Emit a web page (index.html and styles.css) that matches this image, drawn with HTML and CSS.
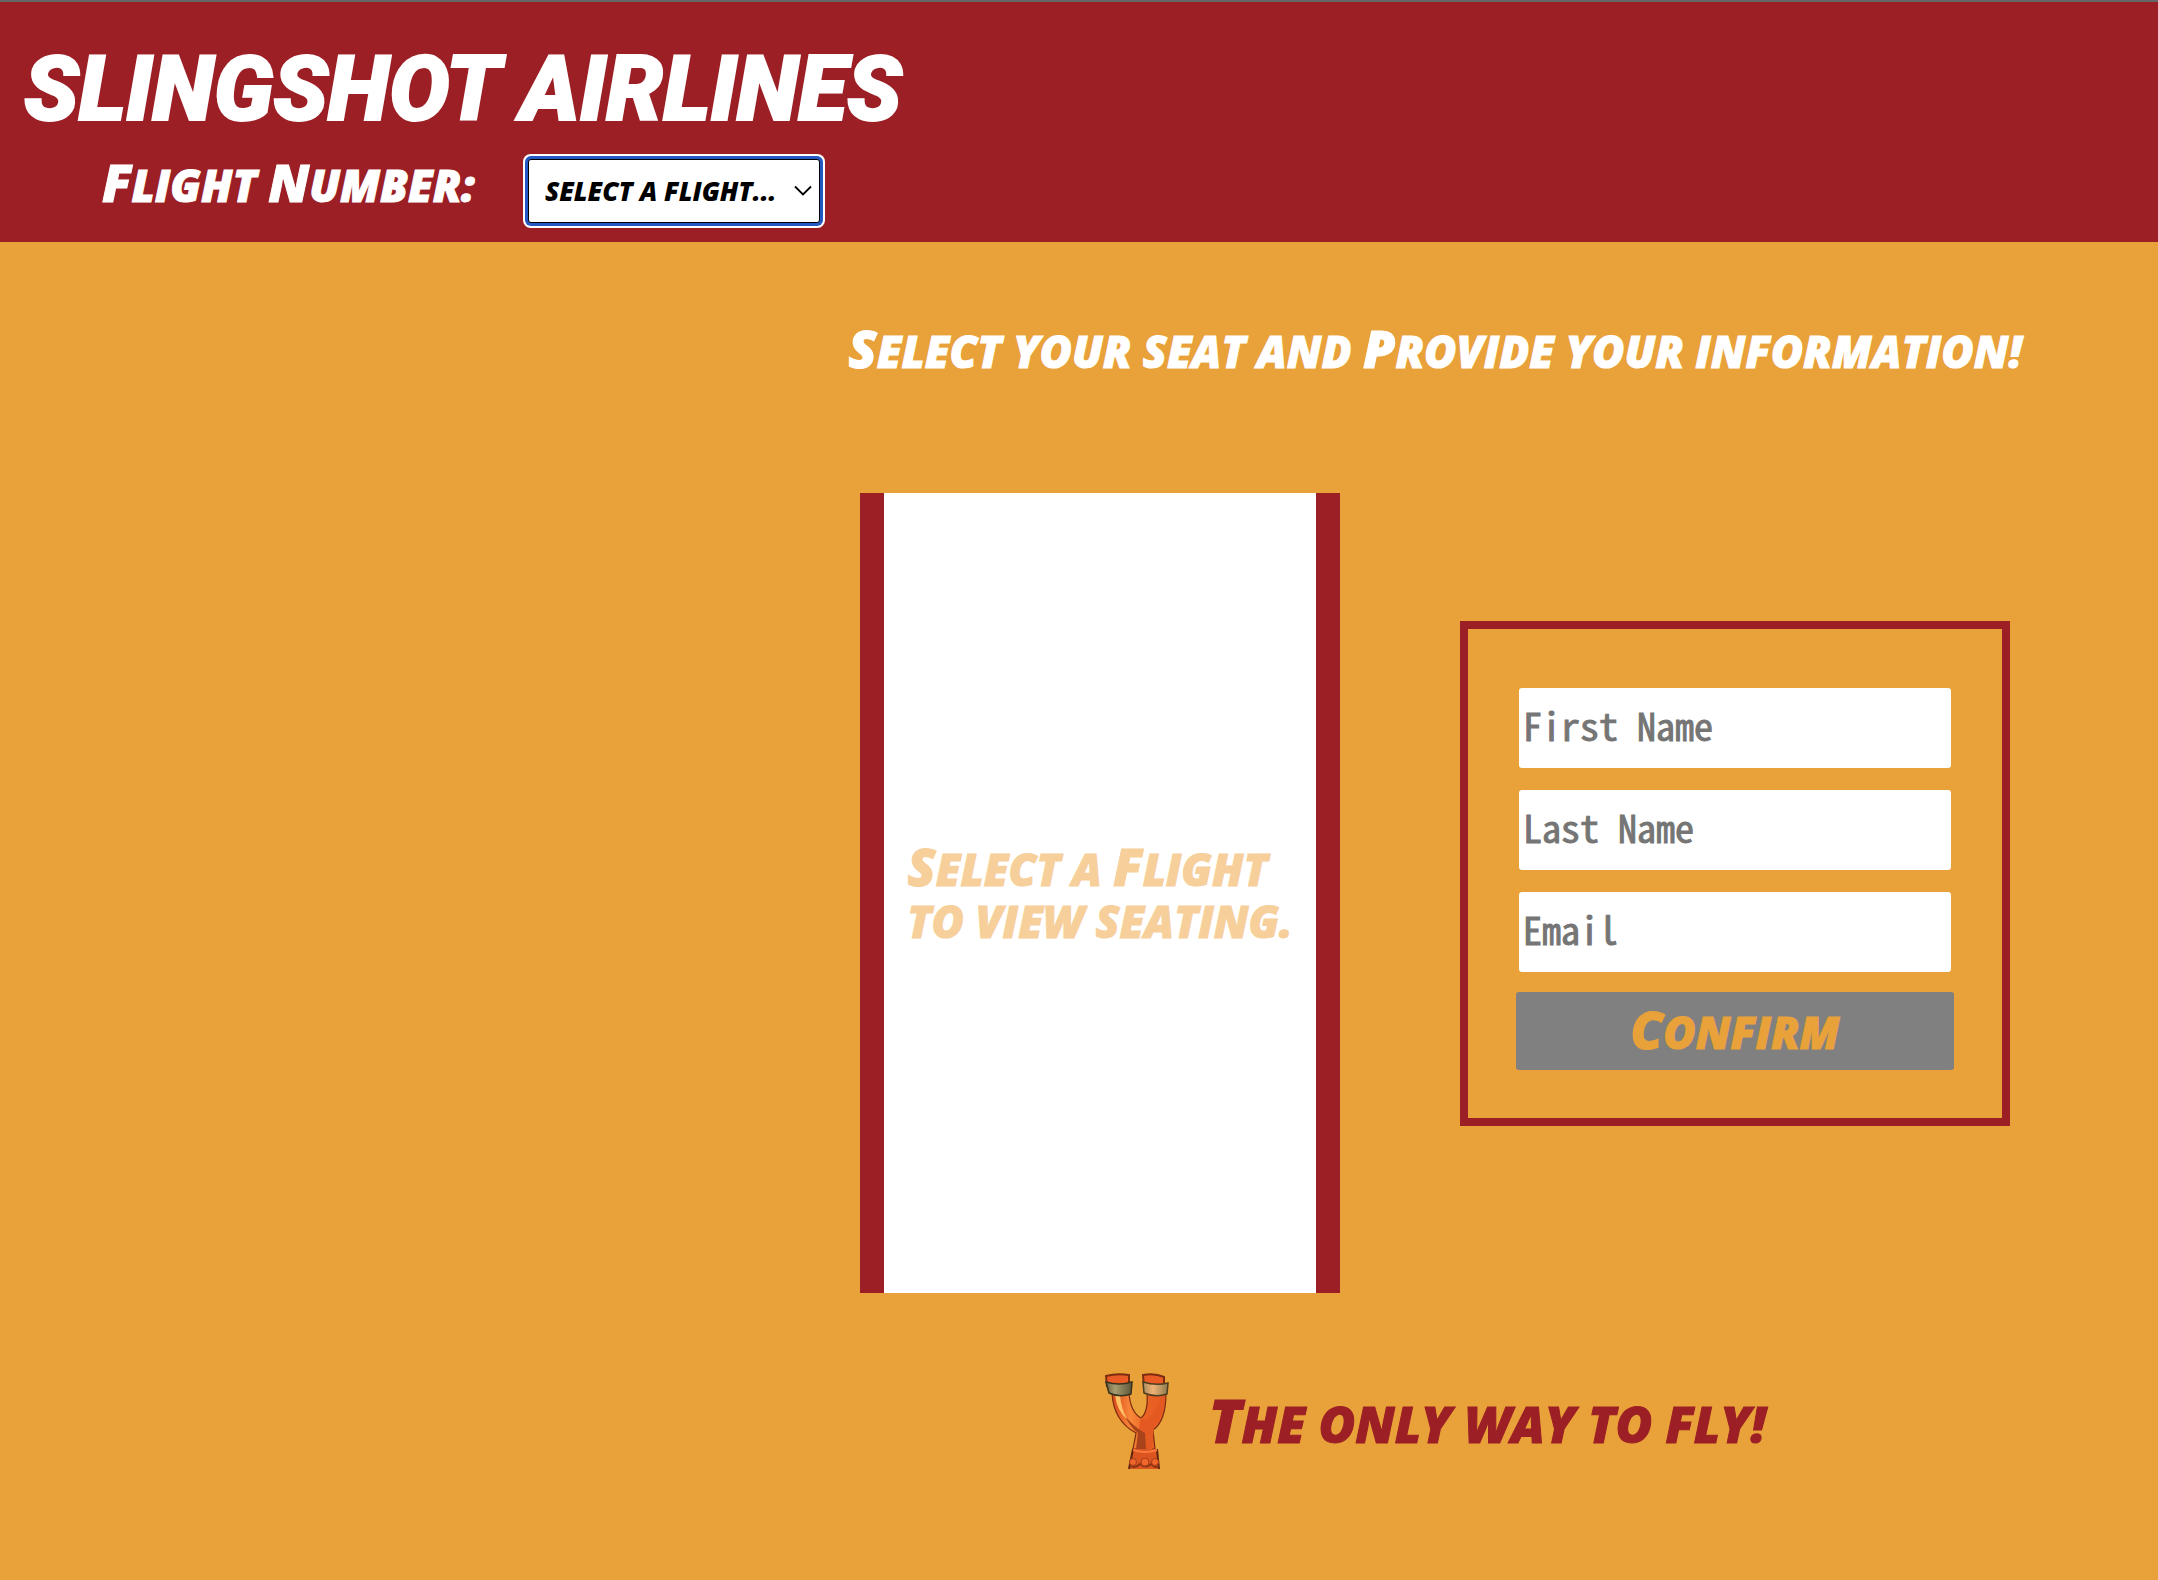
FILE: index.html
```html
<!DOCTYPE html>
<html lang="en">
<head>
<meta charset="utf-8">
<title>Slingshot Airlines</title>
<link rel="stylesheet" href="styles.css">
</head>
<body>
<header class="header">
  <h1 class="logo">Slingshot Airlines</h1>
  <form class="flight">
    <label class="flight-label" for="flight"><span class="cap">F</span>light <span class="cap">N</span>umber:</label>
    <span class="select-wrap">
      <select class="flight-select" id="flight">
        <option>Select a flight...</option>
      </select>
      <svg class="chevron" width="18" height="12" viewBox="0 0 18 12" aria-hidden="true"><path d="M1 1.500l8 8 8-8" fill="none" stroke="#000" stroke-width="1.800"/></svg>
    </span>
  </form>
</header>
<main class="main">
  <h2 class="title"><span class="cap">S</span>elect your seat and <span class="cap">P</span>rovide your information!</h2>
  <div class="booking">
    <section class="plane">
      <p class="plane-note"><span class="cap">S</span>elect a <span class="cap">F</span>light<br>to view seating.</p>
    </section>
    <form class="details">
      <input class="field" type="text" placeholder="First Name" aria-label="First Name">
      <input class="field" type="text" placeholder="Last Name" aria-label="Last Name">
      <input class="field" type="email" placeholder="Email" aria-label="Email">
      <button class="confirm" type="button"><span class="cap">C</span>onfirm</button>
    </form>
  </div>
  <footer class="footer">
    <svg class="slingshot" width="64" height="97" viewBox="0 0 64 97" aria-hidden="true">
      <defs>
        <linearGradient id="wood" x1="0" x2="1" y1="0" y2="0">
          <stop offset="0" stop-color="#d8481b"/><stop offset=".35" stop-color="#f98a3a"/><stop offset=".6" stop-color="#ea6325"/><stop offset="1" stop-color="#e85a22"/>
        </linearGradient>
        <linearGradient id="bandLeft" x1="0" x2="1" y1="0" y2="0">
          <stop offset="0" stop-color="#6b6444"/><stop offset=".35" stop-color="#a79c70"/><stop offset="1" stop-color="#5c5739"/>
        </linearGradient>
        <linearGradient id="bandRight" x1="0" x2="1" y1="0" y2="0">
          <stop offset="0" stop-color="#a88a5c"/><stop offset=".4" stop-color="#f0b276"/><stop offset="1" stop-color="#8b7b50"/>
        </linearGradient>
      </defs>
      <path d="M7 20C8 40 16 52 31 60L28 76H50L48 57C57 51 61 38 61 20H42C43 33 41 41 36 45C29 41 25 34 24 20Z" fill="url(#wood)" stroke="#7c2c10" stroke-width="1.200"/>
      <path d="M36 45Q42 50 48 40Q56 30 56 21H60Q60 42 49 54L47 76H34V57Z" fill="#e45821"/>
      <path d="M33 60L31 76H41L40 60Q29 54 20 43Q25 54 33 60Z" fill="#a8431b"/>
      <path d="M10 22Q12 38 22 46Q16 35 15 22Z" fill="#ffc066"/>
      <path d="M1 3Q12 0 24 2V13H2Z" fill="#ea5b25" stroke="#7c2c10" stroke-width="2"/>
      <path d="M38 2Q50 0 59 4V14H39Z" fill="#ea5b25" stroke="#7c2c10" stroke-width="2"/>
      <path d="M1 9Q14 13 27 9L26 21Q15 25 4 20Z" fill="url(#bandLeft)" stroke="#35321d" stroke-width="1.500"/>
      <path d="M38 9Q51 13 63 10L62 21Q51 25 39 20Z" fill="url(#bandRight)" stroke="#4c3d20" stroke-width="1.500"/>
      <path d="M28 76H52L54 96H24Z" fill="#dc5520"/>
      <path d="M28 76L24 96M52 76L54 96" fill="none" stroke="#5e2410" stroke-width="2"/>
      <path d="M28 77Q40 81 52 77" fill="none" stroke="#fa7a3d" stroke-width="2"/>
      <path d="M26 93Q30 96 35 91Q41 96 46 91Q50 96 54 93" fill="none" stroke="#8e3514" stroke-width="2"/>
      <g fill="#f0662b" stroke="#a63e18"><circle cx="28" cy="89" r="3.500"/><circle cx="40" cy="89" r="4"/><circle cx="50" cy="89" r="3.500"/></g>
    </svg>
    <p class="tagline"><span class="cap-lg">T</span>he only way to fly!</p>
  </footer>
</main>
</body>
</html>
```
FILE: styles.css
```css
* { box-sizing: border-box; }

body {
  margin: 0;
  min-height: 100vh;
  background: #e9a13a;
  color: #fff;
  font-family: "Open Sans", sans-serif;
  font-size: 44px;
  font-weight: 800;
  font-style: italic;
  line-height: 52px;
}

h1, h2, p { margin: 0; font-weight: 800; }

.cap { font-size: 52px; }
.cap-lg { font-size: 60px; }

.header {
  padding: 36px 24px 14px;
  border-top: 2px solid #666;
  background: #9b1f25;
}

.logo {
  font-family: Roboto, "Open Sans", sans-serif;
  font-size: 90px;
  font-weight: 900;
  line-height: 104px;
  text-transform: uppercase;
  -webkit-text-stroke: 2px #fff;
}

.flight {
  display: flex;
  align-items: center;
  gap: 44px;
  padding-left: 78px;
  margin: 14px 0 2px;
  height: 70px;
}

.flight-label {
  width: 382px;
  padding-bottom: 16px;
  white-space: nowrap;
}

.flight-label, .title, .plane-note, .confirm, .tagline {
  text-transform: uppercase;
  -webkit-text-stroke: 1px currentColor;
}

.select-wrap { display: flex; align-items: center; }

.flight-select {
  appearance: none;
  width: 292px;
  height: 64px;
  padding: 0 36px 0 16px;
  border: 1px solid #000;
  border-radius: 3px;
  outline: none;
  box-shadow: 0 0 0 3px #2459c4, 0 0 0 5px #fff;
  background: #fff;
  color: #000;
  font: inherit;
  font-size: 26px;
  text-transform: uppercase;
}

.chevron { margin-left: -26px; }

.main {
  display: flex;
  flex-direction: column;
  align-items: center;
  padding: 80px 0 0 33%;
}

.title { font-size: 44px; }

.booking {
  display: flex;
  align-items: center;
  gap: 120px;
  margin-top: 116px;
}

.plane {
  display: flex;
  align-items: center;
  justify-content: center;
  width: 480px;
  height: 800px;
  border: solid #9b1f25;
  border-width: 0 24px;
  background: #fff;
  color: #f6cf9a;
}

.details {
  display: flex;
  flex-direction: column;
  align-items: center;
  gap: 22px;
  width: 550px;
  margin-bottom: 40px;
  padding: 59px 48px 48px;
  border: 8px solid #9b1f25;
}

.field {
  width: 432px;
  height: 80px;
  padding: 0 4px 6px;
  border: 0;
  border-radius: 3px;
  background: #fff;
  color: #000;
  font: 400 38px/56px "Noto Sans Mono CJK JP", "Liberation Mono", monospace;
}

.field::placeholder {
  color: #757575;
  -webkit-text-stroke: 1px #757575;
}

.confirm {
  width: 438px;
  height: 78px;
  margin-top: -2px;
  padding: 0;
  border: 0;
  border-radius: 3px;
  background: #808080;
  color: #e9a13a;
  font: inherit;
}

.footer {
  display: flex;
  align-items: center;
  gap: 40px;
  margin-top: 80px;
  padding-bottom: 80px;
}

.tagline {
  color: #9b1f25;
  font-size: 50px;
  line-height: 60px;
}
```
